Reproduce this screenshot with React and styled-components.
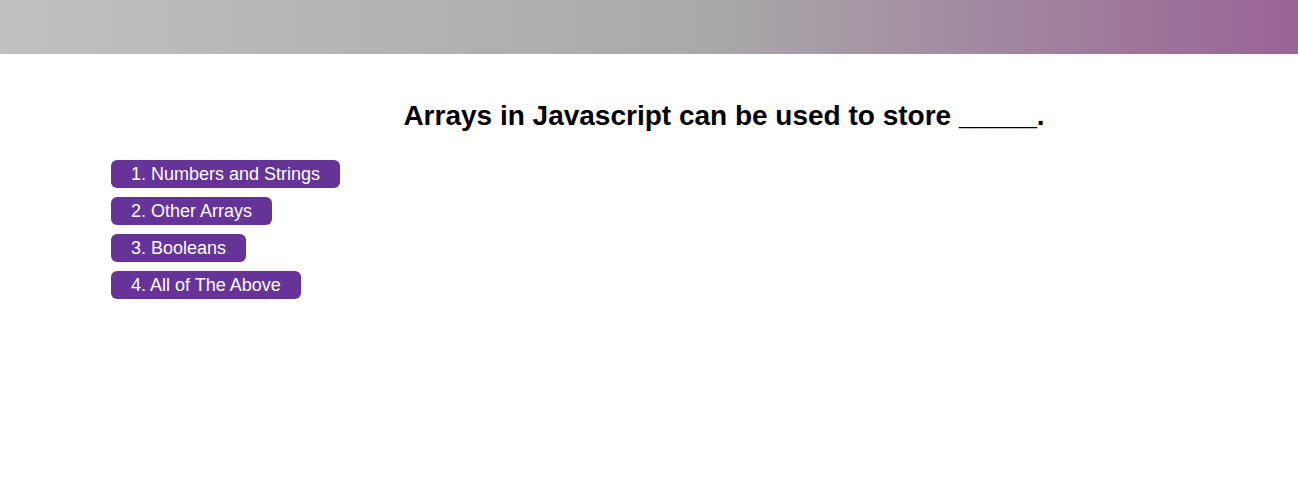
import styled, { createGlobalStyle } from 'styled-components';

const GlobalStyle = createGlobalStyle`
  body {
    margin: 0;
    background: #fff;
    font-family: "Liberation Sans", Arial, sans-serif;
  }
`

const options = [
  'Numbers and Strings',
  'Other Arrays',
  'Booleans',
  'All of The Above',
]

const App = () => {
  return (
    <Page>
      <GlobalStyle />
      <Header />
      <Quiz>
        <Question>Arrays in Javascript can be used to store _____.</Question>
        <Answers>
          {options.map((opt, i) => (
            <Answer key={opt}>{i + 1}. {opt}</Answer>
          ))}
        </Answers>
      </Quiz>
    </Page>
  )
}

const Page = styled.div`
  min-height: 497px;
`

const Header = styled.header`
  height: 54px;
  background: linear-gradient(to right, #c0c0c0, #a9a9a9 55%, #9a6396);
`

const Quiz = styled.main`
  display: flex;
  flex-direction: column;
  padding: 46px 0 0 111px;
`

const Question = styled.h1`
  margin: 0 0 28px 0;
  padding-left: 39px;
  text-align: center;
  font-size: 28px;
  font-weight: bold;
  line-height: 32px;
  color: #000;
`

const Answers = styled.div`
  display: flex;
  flex-direction: column;
  align-items: flex-start;
  gap: 9px;
`

const Answer = styled.button`
  height: 28px;
  padding: 0 20px;
  border: none;
  border-radius: 6px;
  background: #663399;
  color: #fff;
  font-family: "Liberation Sans", Arial, sans-serif;
  font-size: 18px;
  cursor: pointer;
`

export default App
